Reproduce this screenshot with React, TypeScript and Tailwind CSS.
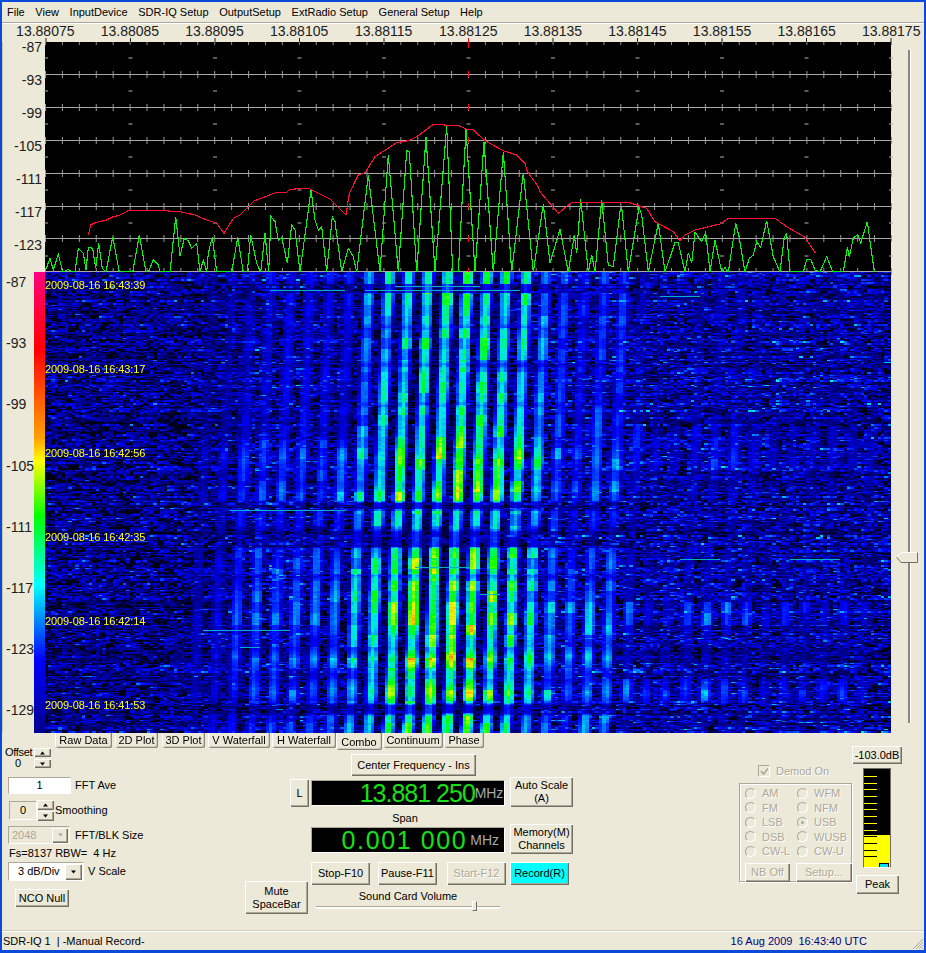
import { useEffect, useRef } from "react"
import type { ReactNode } from "react"

const raised = "bg-[#ece9d8] shadow-[inset_1px_1px_0_#ffffff,inset_-1px_-1px_0_#716f64,inset_-2px_-2px_0_#aca899]"
const sunken = "border border-t-[#aca899] border-l-[#aca899] border-b-white border-r-white"
const disabledText = "text-[#aca899] [text-shadow:1px_1px_0_#ffffff]"

const menus = ["File", "View", "InputDevice", "SDR-IQ Setup", "OutputSetup", "ExtRadio Setup", "General Setup", "Help"]
const freqLabels = ["13.88075", "13.88085", "13.88095", "13.88105", "13.88115", "13.88125", "13.88135", "13.88145", "13.88155", "13.88165", "13.88175"]
const plotDb = ["-87", "-93", "-99", "-105", "-111", "-117", "-123"]
const waterfallDb = ["-87", "-93", "-99", "-105", "-111", "-117", "-123", "-129"]
const stamps = ["2009-08-16 16:43:39", "2009-08-16 16:43:17", "2009-08-16 16:42:56", "2009-08-16 16:42:35", "2009-08-16 16:42:14", "2009-08-16 16:41:53"]

const tabs = [
  { label: "Raw Data", className: "w-[57px] h-[15px]" },
  { label: "2D Plot", className: "w-[43px] h-[15px] ml-[3px]" },
  { label: "3D Plot", className: "w-[43px] h-[15px] ml-[4px]" },
  { label: "V Waterfall", className: "w-[62px] h-[15px] ml-[3px]" },
  { label: "H Waterfall", className: "w-[64px] h-[15px] ml-[2px]" },
  { label: "Combo", className: "w-[46px] h-[17px] pt-[2px]" },
  { label: "Continuum", className: "w-[60px] h-[15px] ml-[1px]" },
  { label: "Phase", className: "w-[40px] h-[15px] ml-[1px]" },
]

const radios = [
  ["AM", "WFM"],
  ["FM", "NFM"],
  ["LSB", "USB"],
  ["DSB", "WUSB"],
  ["CW-L", "CW-U"],
]

// spectrum traces, read off the picture: [x*3, y*3] in two crops
const greenA = [135,816,150,775,160,810,175,762,188,816,205,808,215,816,225,816,235,745,250,760,258,810,265,742,278,745,287,805,296,730,307,805,318,816,338,710,358,816,398,816,418,705,438,816,448,810,460,780,475,795,480,816,510,816,527,650,540,768,553,715,565,722,575,745,590,730,600,816,610,780,620,816,625,760,637,710,650,816,695,816,713,712,730,816,742,816,752,705,770,790,782,816,795,700,806,816,813,650,825,665,835,720,845,712,862,790,875,675,885,690,900,816,933,570,945,660,955,690,965,680,980,816,997,650,1005,665,1025,816,1045,745,1060,770,1070,816,1105,525,1140,816,1165,465,1195,816,1220,452,1228,455,1250,816,1278,410,1305,816,1340,378]
const greenB = [38,516,55,516,78,88,105,516,132,125,160,516,190,155,215,516,250,218,280,516,310,312,330,488,360,388,385,516,403,405,410,460,422,298,445,516,455,465,465,516,485,300,505,495,520,500,540,335,545,322,565,516,597,322,605,345,625,516,655,370,675,516,705,428,715,428,735,516,745,458,755,490,765,397,785,425,797,397,810,516,825,420,845,516,855,503,865,516,887,370,897,410,915,516,928,475,940,465,950,425,962,442,980,362,1000,470,1020,516,1033,410,1040,402,1050,516,1090,516,1100,478,1112,478,1125,510,1140,516,1160,470,1178,516,1210,516,1222,442,1228,470,1240,415,1253,403,1262,430,1282,365,1303,516]
const redA = [265,705,272,675,285,668,320,660,335,652,360,645,385,632,490,632,540,635,585,645,620,660,650,670,672,700,700,655,720,645,762,603,830,577,860,577,870,568,925,565,990,597,1038,645,1048,580,1075,525,1095,518,1125,470,1190,428,1225,422,1250,410,1300,373,1380,378]
const redB = [80,88,100,90,135,122,190,152,230,165,255,190,262,215,295,260,300,275,355,340,395,307,565,307,620,325,645,365,700,395,720,422,735,405,765,390,840,372,865,355,1005,355,1040,380,1095,412,1127,460]

function tracePoints(a: number[], b: number[]) {
  const out: string[] = []
  for (let i = 0; i < a.length; i += 2) out.push(`${(a[i] / 3).toFixed(1)},${(a[i + 1] / 3).toFixed(1)}`)
  for (let i = 0; i < b.length; i += 2) out.push(`${(440 + b[i] / 3).toFixed(1)},${(100 + b[i + 1] / 3).toFixed(1)}`)
  return out.join(" ")
}

function SpectrumPlot() {
  const gridY = [75, 108, 141, 174, 207, 239, 272]
  const midY = [58, 91, 124, 157, 190, 223, 256]
  const minor = Array.from({ length: 51 }, (_, i) => 45.5 + i * 16.92)
  const major = Array.from({ length: 11 }, (_, i) => 46 + i * 84.5)
  return (
    <svg viewBox="45 42 846 230" className="block w-[846px] h-[230px] bg-black overflow-visible">
      {gridY.map((y) => (
        <line key={y} x1="45" x2="891" y1={y - 0.5} y2={y - 0.5} stroke="#a8a8a8" />
      ))}
      {gridY.map((y) =>
        minor.map((x) => <line key={`${y}-${x}`} x1={x} x2={x} y1={y - 4} y2={y + 3} stroke="#9a9a9a" />)
      )}
      {minor.map((x) => (
        <line key={x} x1={x} x2={x} y1="42" y2="45" stroke="#8a8a8a" />
      ))}
      {midY.map((y) =>
        major.map((x) => <line key={`${y}-${x}`} x1={x - 2} x2={x + 2} y1={y} y2={y} stroke="#b0b0b0" />)
      )}
      {major.map((x) => (
        <line key={x} x1={x} x2={x} y1="38" y2="42" stroke={x === 468.5 ? "#ff0020" : "#222222"} />
      ))}
      {[42, 71, 104, 137, 170, 203, 236, 268].map((y) => (
        <line key={y} x1="468.5" x2="468.5" y1={y} y2={y + 6} stroke="#ff0020" />
      ))}
      <polyline points={tracePoints(greenA, greenB)} fill="none" stroke="#10f010" strokeWidth="1.1" shapeRendering="crispEdges" />
      <polyline points={tracePoints(redA, redB)} fill="none" stroke="#ff1030" strokeWidth="1.1" shapeRendering="crispEdges" />
    </svg>
  )
}

const colorStops: [number, number, number, number][] = [
  [0, 0, 0, 0],
  [0.04, 0, 0, 110],
  [0.13, 0, 0, 255],
  [0.22, 0, 120, 255],
  [0.3, 0, 235, 235],
  [0.43, 0, 255, 0],
  [0.57, 240, 255, 0],
  [0.68, 255, 140, 0],
  [0.85, 255, 0, 0],
  [1, 255, 0, 128],
]

function colorOf(v: number) {
  if (v <= 0) return "rgb(0,0,0)"
  for (let i = 1; i < colorStops.length; i++) {
    const a = colorStops[i - 1]
    const b = colorStops[i]
    if (v <= b[0]) {
      const t = (v - a[0]) / (b[0] - a[0])
      return `rgb(${a[1] + (b[1] - a[1]) * t | 0},${a[2] + (b[2] - a[2]) * t | 0},${a[3] + (b[3] - a[3]) * t | 0})`
    }
  }
  return "rgb(255,0,128)"
}

function lerpTable(table: number[], at: number) {
  for (let i = 2; i < table.length; i += 2) {
    if (at <= table[i]) {
      const t = (at - table[i - 2]) / (table[i] - table[i - 2])
      return table[i - 1] + (table[i + 1] - table[i - 1]) * t
    }
  }
  return table[table.length - 1]
}

// tone strength over time (page y -> gain)
const timeGain = [272,1,282,1,284,0.45,292,0.45,293,0.95,322,0.9,326,0.7,330,0.9,360,0.85,364,0.6,368,0.85,400,0.85,404,0.65,408,0.9,430,0.95,445,1.05,458,1.3,468,1.05,485,1.05,493,1.35,500,1.2,503,0.3,508,0.3,510,0.9,525,0.85,532,0.4,546,0.35,548,1,560,1.2,572,1.2,575,0.8,580,1.05,610,1.25,628,1.3,640,1,648,0.95,658,1.4,668,1,672,0.8,680,0.9,692,1.3,702,0.9,705,0.35,712,0.35,716,1,733,1]
// drift of the tone comb
const toneBase = [272,370,500,360,545,357,700,352,733,349]
// tone strength by comb index -8..26
const toneAmp = [0.08,0.12,0.17,0.19,0.2,0.2,0.2,0.22,0.31,0.39,0.45,0.48,0.5,0.5,0.49,0.46,0.42,0.33,0.25,0.2,0.25,0.25,0.2,0.13,0.12,0.17,0.19,0.19,0.15,0.1,0.12,0.12,0.12,0.12,0.1]

const streaks = [
  [290, 270, 345], [290, 365, 520], [286, 395, 480], [510, 230, 345], [567, 415, 470], [630, 203, 290],
  [559, 680, 720], [559, 790, 840], [594, 480, 500], [647, 240, 260], [296, 660, 700],
]

function Waterfall() {
  const ref = useRef<HTMLCanvasElement>(null)
  useEffect(() => {
    const ctx = ref.current?.getContext("2d")
    if (!ctx) return
    let s = 20090816
    const rnd = () => {
      s = (s + 0x6d2b79f5) | 0
      let t = Math.imul(s ^ (s >>> 15), 1 | s)
      t = (t + Math.imul(t ^ (t >>> 7), 61 | t)) ^ t
      return ((t ^ (t >>> 14)) >>> 0) / 4294967296
    }
    const binW = 3.4
    const bins = 249
    const segGain: Record<string, number> = {}
    let prev: number[] = new Array(bins).fill(0)
    ctx.fillStyle = "#000"
    ctx.fillRect(0, 0, 846, 461)
    for (let row = 0; row < 461; ) {
      const h = rnd() < 0.3 ? 2 : 1
      const y = row + 272
      const base = lerpTable(toneBase, y)
      const t = lerpTable(timeGain, y)
      const rowGain = 0.6 + rnd() * 0.75
      const cur: number[] = []
      let last = 0
      for (let i = 0; i < bins; i++) {
        const x = 45 + (i + 0.5) * binW
        const r = rnd()
        const leftDark = x < 250 ? 0.85 : 1
        let n = (r < 0.42 ? r * 0.03 : r < 0.96 ? 0.03 + (r - 0.42) * 0.22 : 0.15 + (r - 0.96) * 2) * rowGain * leftDark
        n = Math.max(n, last * (rnd() < 0.55 ? 0.7 : 0.1), prev[i] * 0.2)
        last = n
        // noise sinks between the strong tones
        const centerDim = 0.5 + 0.5 * Math.min(1, Math.abs(x - 430) / 130)
        // the comb of tones
        const k = Math.round((x - base) / 19.6)
        const idx = k + 8
        let v = n * centerDim
        const d = Math.abs(x - (base + k * 19.6))
        if (idx >= 0 && idx < toneAmp.length && d < 7) {
          const key = `${k}-${Math.floor(row / 11)}`
          if (segGain[key] === undefined) segGain[key] = 0.62 + rnd() * 0.46
          let a = toneAmp[idx]
          if (k >= 14) a *= (y > 678 && y < 702) ? 1.15 : (y > 600 && y < 625) ? 1.0 : (y > 425 && y < 470) ? 0.8 : 0.45
          else if (k >= 10) a *= y > 600 ? 1.05 : 0.9
          if (k < 0) a *= y < 440 ? 0.75 : 1
          const tone = a * t * segGain[key] * (0.93 + rnd() * 0.12) * (1 - (d / 7) * (d / 7))
          v = Math.max(v, tone)
        }
        cur.push(n)
        ctx.fillStyle = colorOf(v)
        const x0 = Math.floor(i * binW)
        ctx.fillRect(x0, row, Math.floor((i + 1) * binW) - x0, h)
      }
      prev = cur
      row += h
    }
    ctx.fillStyle = "#00b0c8"
    for (const [y, a, b] of streaks) ctx.fillRect(a - 45, y - 272, b - a, 1)
  }, [])
  return <canvas ref={ref} width={846} height={461} className="block w-[846px] h-[461px] bg-black" />
}

function Btn({ children, className = "" }: { children?: ReactNode; className?: string }) {
  return (
    <div className={`${raised} flex items-center justify-center text-center leading-[13px] shrink-0 ${className}`}>
      {children}
    </div>
  )
}

function Arrow({ up = false, color = "#000000" }: { up?: boolean; color?: string }) {
  return (
    <svg width="7" height="4" viewBox="0 0 7 4" className="block">
      <path d={up ? "M3.5 0.5 L6 3.5 H1 Z" : "M1 0.5 H6 L3.5 3.5 Z"} fill={color} />
    </svg>
  )
}

function Radio({ label, checked = false }: { label: string; checked?: boolean }) {
  return (
    <div className="flex items-center w-[52px] h-[14.5px]">
      <div className="w-[11px] h-[11px] rounded-full border border-t-[#aca899] border-l-[#aca899] border-b-white border-r-white flex items-center justify-center shrink-0">
        {checked && <div className="w-[3px] h-[3px] rounded-full bg-[#aca899]" />}
      </div>
      <span className={`ml-[6px] ${disabledText}`}>{label}</span>
    </div>
  )
}

export default function App() {
  return (
    <div className="relative w-[926px] h-[953px] overflow-hidden flex flex-col bg-[#ece9d8] border-[2px] border-b-[3px] border-[#0a4ad8] text-[11px] text-black font-['Liberation_Sans',Arial,sans-serif]">
      {/* menu */}
      <div className="h-[20px] flex items-center gap-[10.6px] pl-[5px] shrink-0">
        {menus.map((m) => (
          <span key={m}>{m}</span>
        ))}
      </div>
      <div className="h-[2px] border-t border-t-[#aca899] border-b border-b-white shrink-0" />

      {/* frequency axis */}
      <div className="h-[18px] flex pl-px overflow-hidden shrink-0 whitespace-nowrap">
        {freqLabels.map((f) => (
          <span key={f} className="w-[84.6px] shrink-0 text-center text-[14px] leading-[14px] text-[#202020]">
            {f}
          </span>
        ))}
      </div>

      {/* plot + waterfall + level slider */}
      <div className="flex h-[691px] shrink-0">
        <div className="w-[889px] flex flex-col">
          <div className="flex h-[230px]">
            <div className="w-[43px] border-l border-l-[#c8c5b4] flex flex-col items-end pr-[3px] text-[14px] leading-[11px] text-[#202020]">
              {plotDb.map((d) => (
                <div key={d} className="h-[33px] shrink-0">
                  {d}
                </div>
              ))}
            </div>
            <SpectrumPlot />
          </div>
          <div className="flex h-[461px]">
            <div className="w-[32px] border-l border-l-[#c8c5b4] pl-[3px] pt-[3px] flex flex-col text-[14px] leading-[14px] text-[#202020]">
              {waterfallDb.map((d) => (
                <div key={d} className="h-[61.2px] shrink-0">
                  {d}
                </div>
              ))}
            </div>
            <div className="w-[11px] h-[461px] bg-[linear-gradient(to_bottom,#ff0080_0%,#ff0040_8%,#ff0000_17%,#ff6000_28%,#ffa000_36%,#ffff00_41%,#80ff00_47%,#00ff00_53%,#00ff80_60%,#00ffff_68%,#0080ff_76%,#0000ff_84%,#000090_100%)]" />
            <div className="relative w-[846px] h-[461px]">
              <Waterfall />
              <div className="absolute inset-0 flex flex-col pt-[7px] text-[11px] leading-[12px] tracking-[-0.1px] text-[#ffff20] whitespace-nowrap">
                {stamps.map((t) => (
                  <div key={t} className="h-[84px] shrink-0">
                    {t}
                  </div>
                ))}
              </div>
            </div>
          </div>
        </div>
        <div className="relative w-[33px] flex justify-center pt-[8px] pb-[10px] pl-[3px]">
          <div className="w-[3px] h-full border-l-2 border-l-[#8a887a] border-r border-r-white" />
          <div className="absolute left-[5px] top-[510px] w-[22px] h-[11px] flex">
            <svg width="22" height="11" viewBox="0 0 22 11" className="block">
              <path d="M0.5 5 L5 0.5 H21.5 V10.5 H5 Z" fill="#ece9d8" stroke="#ffffff" />
              <path d="M0.5 5 L5 10.5 H21.5 V0.5" fill="none" stroke="#716f64" />
            </svg>
          </div>
        </div>
      </div>

      {/* tabs */}
      <div className="h-[17px] pl-[53px] flex items-start shrink-0 relative z-10">
        {tabs.map((t) => (
          <div
            key={t.label}
            className={`${t.className} shrink-0 flex items-center justify-center rounded-b-[2px] shadow-[inset_1px_0_0_#ffffff,inset_-1px_-1px_0_#8a887a,inset_-2px_-2px_0_#d0cdbc]`}
          >
            {t.label}
          </div>
        ))}
      </div>

      {/* controls */}
      <div className="flex h-[185px] -mt-[4px] shrink-0">
        {/* fft settings */}
        <div className="w-[243px] shrink-0">
          <div className="flex pl-[3px]">
            <div className="w-[29px] leading-[11px] pt-px">
              <div className="tracking-[-0.3px]">Offset</div>
              <div className="pl-[10px]">0</div>
            </div>
            <div className="flex flex-col gap-[2px] mt-[2px]">
              <Btn className="w-[17px] h-[9px]"><Arrow up /></Btn>
              <Btn className="w-[17px] h-[9px]"><Arrow /></Btn>
            </div>
          </div>
          <div className="flex items-center mt-[8px] ml-[6px]">
            <div className={`w-[63px] h-[17px] bg-white text-center leading-[14px] ${sunken}`}>1</div>
            <span className="ml-[4px]">FFT Ave</span>
          </div>
          <div className="flex items-center mt-[6px] ml-[7px]">
            <div className={`w-[28px] h-[19px] text-center leading-[17px] ${sunken}`}>0</div>
            <div className="flex flex-col gap-px w-[17px]">
              <Btn className="w-[17px] h-[10px]"><Arrow up /></Btn>
              <Btn className="w-[17px] h-[10px]"><Arrow /></Btn>
            </div>
            <span className="ml-px">Smoothing</span>
          </div>
          <div className="flex items-center mt-[5px] ml-[6px]">
            <div className={`w-[62px] h-[18px] flex items-center justify-between pl-[3px] pr-px ${sunken}`}>
              <span className="text-[#aca899]">2048</span>
              <Btn className="w-[16px] h-[15px]"><Arrow color="#aca899" /></Btn>
            </div>
            <span className="ml-[5px]">FFT/BLK Size</span>
          </div>
          <div className="mt-[3px] ml-[7px] h-[12px] leading-[12px] whitespace-pre">Fs=8137 RBW=  4 Hz</div>
          <div className="flex items-center mt-[3px] ml-[6px]">
            <div className={`w-[76px] h-[19px] bg-white flex items-center justify-between pl-[9px] pr-px ${sunken}`}>
              <span>3 dB/Div</span>
              <Btn className="w-[17px] h-[16px]"><Arrow /></Btn>
            </div>
            <span className="ml-[4px]">V Scale</span>
          </div>
          <Btn className="mt-[8px] ml-[13px] w-[54px] h-[18px]">NCO Null</Btn>
        </div>

        {/* frequency and transport */}
        <div className="w-[328px] shrink-0">
          <Btn className="mt-[8px] ml-[106px] w-[125px] h-[22px]">Center Frequency - Ins</Btn>
          <div className="flex items-start mt-px ml-[45px]">
            <Btn className="mt-[2px] w-[19px] h-[28px]">L</Btn>
            <div className={`mt-[3px] ml-[2px] w-[194px] h-[26px] bg-black flex items-center justify-end pr-px ${sunken}`}>
              <span className="text-[25px] leading-[24px] text-[#18e018] tracking-[-1px] whitespace-pre">13.881 250</span>
              <span className="text-[14px] text-[#a8a8a8] tracking-[-0.2px]">MHz</span>
            </div>
            <Btn className="ml-[5px] w-[63px] h-[30px]">Auto Scale<br />(A)</Btn>
          </div>
          <div className="mt-[5px] ml-[66px] w-[188px] h-[12px] leading-[12px] text-center">Span</div>
          <div className="flex items-start ml-[66px]">
            <div className={`mt-[3px] w-[194px] h-[26px] bg-black flex items-center justify-end pr-[5px] ${sunken}`}>
              <span className="text-[25px] leading-[24px] text-[#18e018] tracking-[1.6px] whitespace-pre">0.001 000</span>
              <span className="ml-[3px] text-[14px] text-[#a8a8a8]">MHz</span>
            </div>
            <Btn className="ml-[5px] w-[63px] h-[30px]">Memory(M)<br />Channels</Btn>
          </div>
          <div className="flex mt-[8px] ml-[66px]">
            <Btn className="w-[59px] h-[23px]">Stop-F10</Btn>
            <Btn className="ml-[8px] w-[59px] h-[23px]">Pause-F11</Btn>
            <Btn className={`ml-[10px] w-[59px] h-[23px] ${disabledText}`}>Start-F12</Btn>
            <Btn className="ml-[4px] w-[59px] h-[23px] !bg-[#00ffff]">Record(R)</Btn>
          </div>
          <div className="flex -mt-[4px]">
            <Btn className="w-[63px] h-[33px]">Mute<br />SpaceBar</Btn>
            <div className="ml-[8px] w-[184px] pt-[9px]">
              <div className="h-[12px] leading-[12px] text-center">Sound Card Volume</div>
              <div className="relative mt-[4px] h-[3px] border-t border-t-[#aca899] bg-white">
                <div className="absolute left-[156px] -top-[6px] w-[5px] h-[10px] bg-[#ece9d8] border border-t-white border-l-white border-r-[#716f64] border-b-[#716f64]" />
              </div>
            </div>
          </div>
        </div>

        {/* demod */}
        <div className="ml-[166px] w-[113px] shrink-0">
          <div className="mt-[19px] ml-[19px] flex items-center h-[12px]">
            <div className={`w-[12px] h-[12px] flex items-center justify-center ${sunken}`}>
              <svg width="9" height="9" viewBox="0 0 9 9" className="block">
                <path d="M1 4 L3.5 7 L8 1.5" fill="none" stroke="#aca899" strokeWidth="1.6" />
              </svg>
            </div>
            <span className={`ml-[6px] ${disabledText}`}>Demod On</span>
          </div>
          <div className="mt-[6px] h-[99px] border border-[#aca899] pl-[5px] pt-[2px] shadow-[inset_1px_1px_0_#ffffff,1px_1px_0_#ffffff]">
            {radios.map(([a, b]) => (
              <div key={a} className="flex">
                <Radio label={a} />
                <Radio label={b} checked={b === "USB"} />
              </div>
            ))}
            <div className="flex mt-[4px]">
              <Btn className={`w-[45px] h-[19px] ${disabledText}`}>NB Off</Btn>
              <Btn className={`ml-[6px] w-[56px] h-[19px] ${disabledText}`}>Setup...</Btn>
            </div>
          </div>
        </div>

        {/* level meter */}
        <div className="w-[53px] shrink-0">
          <Btn className="w-[50px] h-[18px]">-103.0dB</Btn>
          <div className="relative mt-[4px] ml-[11px] w-[28px] h-[100px] bg-black border border-t-[#716f64] border-l-[#716f64] border-r-[#716f64] border-b-white flex flex-col justify-end">
            <div className="h-[32px] bg-[#ffff00]" />
            <div className="absolute left-0 top-[7px] w-[13px] flex flex-col gap-[5.7px]">
              {[0, 1, 2, 3, 4, 5, 6, 7, 8, 9, 10, 11, 12].map((i) => (
                <div key={i} className={`h-px ${i > 8 ? "bg-black" : "bg-[#ffff00]"}`} />
              ))}
            </div>
            <div className="absolute right-[1px] bottom-0 w-[10px] h-[4px] bg-[#00e0ff] border border-black border-b-0" />
          </div>
          <Btn className="mt-[7px] ml-[4px] w-[43px] h-[19px]">Peak</Btn>
        </div>
      </div>

      {/* status bar */}
      <div className="relative h-[19px] border-t border-t-white shadow-[0_-1px_0_#d0cdbc] flex items-center justify-between text-[11px] pl-px shrink-0">
        <span className="whitespace-pre">SDR-IQ 1  | -Manual Record-</span>
        <span className="mr-[57px] text-[#000080] whitespace-pre">16 Aug 2009  16:43:40 UTC</span>
        <svg width="12" height="12" viewBox="0 0 12 12" className="absolute right-0 bottom-0">
          <path d="M11 1 L1 11 M11 4 L4 11 M11 7 L7 11 M11 10 L10 11" stroke="#aca899" strokeWidth="1" />
        </svg>
      </div>
    </div>
  )
}
